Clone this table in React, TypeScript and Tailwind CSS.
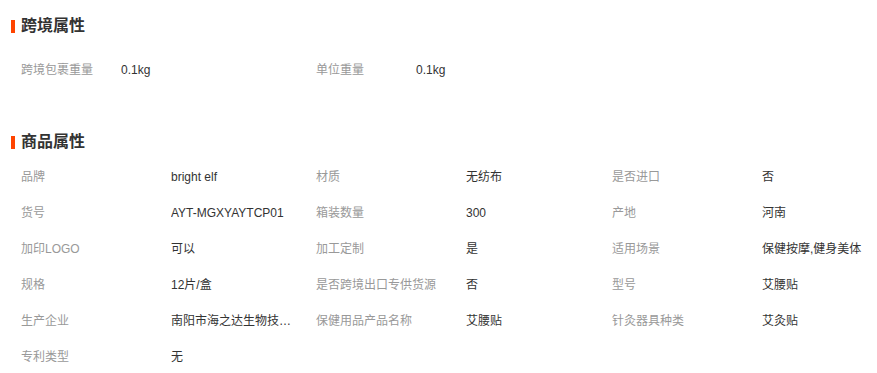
import { Fragment } from "react";

const crossBorder = [
  ["跨境包裹重量", "0.1kg"],
  ["单位重量", "0.1kg"],
];

const goods: [string, string][] = [
  ["品牌", "bright elf"],
  ["材质", "无纺布"],
  ["是否进口", "否"],
  ["货号", "AYT-MGXYAYTCP01"],
  ["箱装数量", "300"],
  ["产地", "河南"],
  ["加印LOGO", "可以"],
  ["加工定制", "是"],
  ["适用场景", "保健按摩,健身美体"],
  ["规格", "12片/盒"],
  ["是否跨境出口专供货源", "否"],
  ["型号", "艾腰贴"],
  ["生产企业", "南阳市海之达生物技术有限公司"],
  ["保健用品产品名称", "艾腰贴"],
  ["针灸器具种类", "艾灸贴"],
  ["专利类型", "无"],
];

function Heading({ title }: { title: string }) {
  return (
    <div className="flex items-center gap-[6px] h-5">
      <span className="w-[4px] h-[13px] bg-[#ff4400]" />
      <h3 className="text-[16px] font-bold leading-5 text-[#333]">{title}</h3>
    </div>
  );
}

export default function App() {
  const rows: [string, string][][] = [];
  for (let i = 0; i < goods.length; i += 3) rows.push(goods.slice(i, i + 3));

  return (
    <div
      className="w-[877px] h-[373px] overflow-hidden bg-white px-[11px] pt-[16px] text-[12px]"
      style={{ fontFamily: '"Liberation Sans", "Noto Sans CJK SC", sans-serif' }}
    >
      {/* 跨境属性 */}
      <Heading title="跨境属性" />
      <div className="mt-4 pl-[10px] flex items-center h-9">
        <span className="w-[100px] text-[#999]">{crossBorder[0][0]}</span>
        <span className="w-[195px] text-[#333]">{crossBorder[0][1]}</span>
        <span className="w-[100px] text-[#999]">{crossBorder[1][0]}</span>
        <span className="text-[#333]">{crossBorder[1][1]}</span>
      </div>

      {/* 商品属性 */}
      <div className="mt-[44px]">
        <Heading title="商品属性" />
      </div>
      <div className="mt-[7px] pl-[10px]">
        {rows.map((row, i) => (
          <div key={i} className="grid grid-cols-[150px_145px_150px_146px_150px_1fr] items-center h-9">
            {row.map(([k, v]) => (
              <Fragment key={k}>
                <span className="text-[#999]">{k}</span>
                <span className="text-[#333] truncate max-w-[122px]">{v}</span>
              </Fragment>
            ))}
          </div>
        ))}
      </div>
    </div>
  );
}
